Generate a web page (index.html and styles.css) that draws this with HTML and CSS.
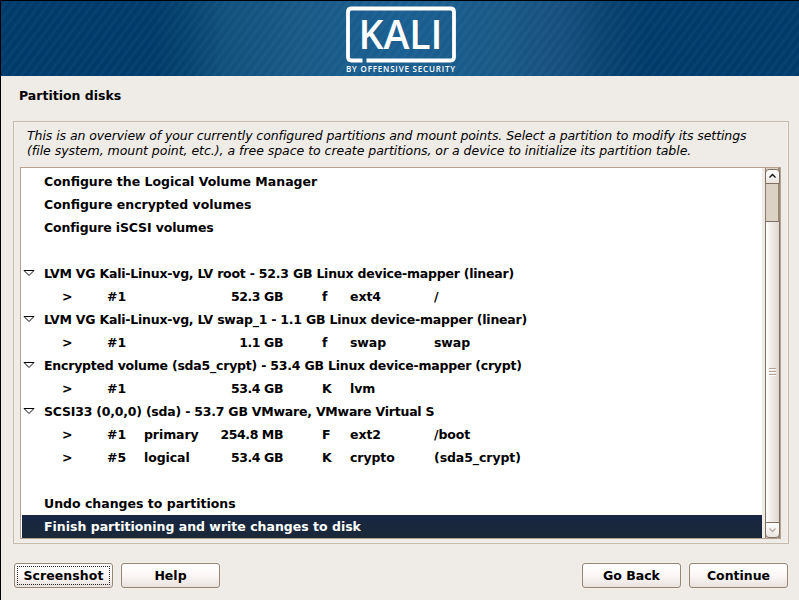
FILE: index.html
```html
<!DOCTYPE html>
<html lang="en">
<head>
<meta charset="utf-8">
<title>Partition disks</title>
<link rel="stylesheet" href="styles.css">
</head>
<body>
<header class="banner">
  <svg class="logo" width="114" height="74" viewBox="0 0 114 74">
    <path class="logo-frame" d="M18.500 59.500H7.500Q4 59.500 4 56V11Q4 7.500 7.500 7.500H106.500Q110 7.500 110 11V56Q110 59.500 106.500 59.500H22.500"/>
    <text class="logo-name" x="14.500" y="48" textLength="84" lengthAdjust="spacingAndGlyphs">KALI</text>
    <text class="logo-sub" x="2" y="71" textLength="109">BY OFFENSIVE SECURITY</text>
  </svg>
</header>
<main>
  <h1>Partition disks</h1>
  <section class="frame">
    <p class="intro"><span class="first">This is an overview of your currently configured partitions and mount points. Select a partition to modify its settings</span><br><span class="second">(file system, mount point, etc.), a free space to create partitions, or a device to initialize its partition table.</span></p>
    <div class="list">
      <div class="rows">
        <div class="row action"><i></i><span>Configure the Logical Volume Manager</span></div>
        <div class="row action"><i></i><span>Configure encrypted volumes</span></div>
        <div class="row action tight"><i></i><span>Configure iSCSI volumes</span></div>
        <div class="row"></div>
        <div class="row"><i><svg width="12" height="8"><path d="M1 1.500H11L6 6.500Z"/></svg></i><span>LVM VG Kali-Linux-vg, LV root - 52.3 GB Linux device-mapper (linear)</span></div>
        <div class="row part"><b>&gt;</b><b>#1</b><b></b><b class="size">52.3 GB</b><b class="use">f</b><b>ext4</b><b>/</b></div>
        <div class="row"><i><svg width="12" height="8"><path d="M1 1.500H11L6 6.500Z"/></svg></i><span>LVM VG Kali-Linux-vg, LV swap_1 - 1.1 GB Linux device-mapper (linear)</span></div>
        <div class="row part"><b>&gt;</b><b>#1</b><b></b><b class="size">1.1 GB</b><b class="use">f</b><b>swap</b><b>swap</b></div>
        <div class="row"><i><svg width="12" height="8"><path d="M1 1.500H11L6 6.500Z"/></svg></i><span>Encrypted volume (sda5_crypt) - 53.4 GB Linux device-mapper (crypt)</span></div>
        <div class="row part"><b>&gt;</b><b>#1</b><b></b><b class="size">53.4 GB</b><b class="use">K</b><b>lvm</b><b></b></div>
        <div class="row"><i><svg width="12" height="8"><path d="M1 1.500H11L6 6.500Z"/></svg></i><span>SCSI33 (0,0,0) (sda) - 53.7 GB VMware, VMware Virtual S</span></div>
        <div class="row part"><b>&gt;</b><b>#1</b><b>primary</b><b class="size">254.8 MB</b><b class="use">F</b><b>ext2</b><b>/boot</b></div>
        <div class="row part"><b>&gt;</b><b>#5</b><b>logical</b><b class="size">53.4 GB</b><b class="use">K</b><b>crypto</b><b>(sda5_crypt)</b></div>
        <div class="row"></div>
        <div class="row action"><i></i><span>Undo changes to partitions</span></div>
        <div class="row action selected"><i></i><span>Finish partitioning and write changes to disk</span></div>
      </div>
      <div class="scrollbar">
        <div class="step up"><svg width="9" height="6"><path d="M1.500 4.500L4.500 1.500L7.500 4.500"/></svg></div>
        <div class="thumb"><span></span><span></span><span></span></div>
        <div class="step down"><svg width="9" height="6"><path d="M1.500 1.500L4.500 4.500L7.500 1.500"/></svg></div>
      </div>
    </div>
  </section>
  <footer>
    <button class="focused">Screenshot</button>
    <button>Help</button>
    <button class="back">Go Back</button>
    <button>Continue</button>
  </footer>
</main>
</body>
</html>
```
FILE: styles.css
```css
* { box-sizing: border-box; }
body {
  margin: 0; width: 799px; height: 600px; overflow: hidden;
  border: solid #000; border-width: 1px 0 0 1px;
  background: #efebe7; color: #000;
  font: 12.5px "DejaVu Sans", sans-serif;
}
.banner {
  height: 75px; display: flex; padding-left: 343px;
  background:
    repeating-linear-gradient(127deg, rgba(255,255,255,0) 0 3px, rgba(120,190,210,.05) 4px 6px, rgba(255,255,255,0) 7px),
    linear-gradient(90deg, #003b6b 0 155px, #07436f 185px, #12507d 225px, #1a5987 300px, #1a5f91 400px, #1a5987 500px, #174f7f 560px, #0a4270 605px, #003b6b 645px);
}
.logo { display: block; }
.logo-frame { fill: none; stroke: #fff; stroke-width: 3.8; }
.logo text { fill: #fff; font-family: "Open Sans", sans-serif; }
.logo-name { font-size: 39px; font-weight: 600; }
.logo-sub { font-size: 8px; font-weight: 600; }
main { padding: 0 10px 0 12px; }
h1 { margin: 0; height: 45px; padding: 12px 0 0 6px; font-size: 12.5px; line-height: 16px; }
.frame { height: 423px; border: 1px solid #c4bbab; padding: 6px 7px 4px 6px; box-shadow: inset 0 0 0 1px #f3f0ec; }
.intro { margin: 0 0 9px 7px; height: 30px; line-height: 15px; font-style: italic; white-space: nowrap; }
.first { letter-spacing: -.075px; }
.second { letter-spacing: -.035px; }
.list { height: 372px; border: 1px solid #b5a190; background: #fff; display: flex; padding-left: 1px; }
.rows { width: 740px; flex: none; padding-top: 2px; font-weight: bold; white-space: nowrap; letter-spacing: -.22px; }
.row { height: 23px; line-height: 23px; display: flex; }
.row i { width: 22px; display: flex; align-items: center; padding: 0 0 2px 1px; }
.row svg { fill: #fff; stroke: #000; stroke-width: 1; }
.action { letter-spacing: 0; }
.tight { letter-spacing: -.14px; }
.part { display: grid; grid-template-columns: 45px 37px 67px 72px 67px 84px 1fr; padding-left: 40px; letter-spacing: -.08px; }
.size { text-align: right; letter-spacing: -.42px; }
.use { padding-left: 39px; }
.selected { color: #fff; background: linear-gradient(#182743, #1a2838); }
.scrollbar { width: 18px; display: flex; flex-direction: column; padding: 1px 0 0 3px; background: linear-gradient(90deg, #efebe7 3px, #8d7a69 3px 4px, #dcd1c5 4px 16px, #9b8775 16px 18px); }
.step { height: 15px; border: 1px solid #806f60; background: linear-gradient(#fff, #e9e4df); display: flex; justify-content: center; align-items: center; }
.step svg { fill: none; stroke: #111; stroke-width: 1.4; }
.up { border-radius: 4px 4px 0 0; }
.down { height: 16px; border-radius: 0 0 4px 4px; }
.down svg { stroke: #b5a9a0; }
.thumb { height: 302px; margin-top: 37px; border: 1px solid #806f60; border-bottom: 0; background: linear-gradient(90deg, #fff, #f1edea 5px, #e0d6cf); display: flex; flex-direction: column; justify-content: center; align-items: center; gap: 1px; }
.thumb span { width: 7px; height: 2px; background: linear-gradient(#b3a497 50%, #fff 50%); }
footer { display: flex; gap: 8px; padding: 19px 1px 0 1px; }
button { width: 99px; height: 25px; padding: 0; border: 1px solid #948473; border-radius: 3px; background: linear-gradient(#fff, #fbf7f6 50%, #e9e3df); box-shadow: 0 0 0 1px #f3efeb; color: #000; font: bold 12.5px/23px "DejaVu Sans", sans-serif; }
.focused { outline: 1px dotted #222; outline-offset: -4px; letter-spacing: .08px; }
.back { margin-left: auto; }
```
